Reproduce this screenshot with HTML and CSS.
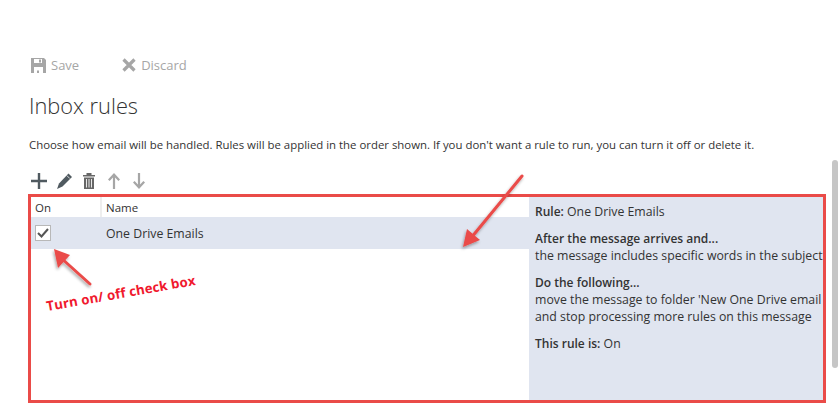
FILE: index.html
```html
<!DOCTYPE html>
<html lang="en">
<head>
<meta charset="utf-8">
<title>Inbox rules</title>
<link rel="stylesheet" href="styles.css">
</head>
<body>
<div class="page">
  <div class="actions">
    <span class="action save">
      <svg width="15" height="15" viewBox="0 0 15 15"><path fill="#a6a6a6" d="M0 0h13l2 2v13H0z"/><path fill="#fff" d="M3 1h8v4H3zM3 9h9v6H3z"/><path fill="#a6a6a6" d="M8 1.500h2v3H8zM6 12.500h2V15H6z"/></svg>
      Save
    </span>
    <span class="action discard">
      <svg width="14" height="14" viewBox="0 0 14 14"><path fill="none" stroke="#a6a6a6" stroke-width="3.200" d="M1.500 1.500l11 11M12.500 1.500l-11 11"/></svg>
      Discard
    </span>
  </div>
  <h1 class="title">Inbox rules</h1>
  <p class="intro">Choose how email will be handled. Rules will be applied in the order shown. If you don't want a rule to run, you can turn it off or delete it.</p>
  <div class="toolbar">
    <svg class="tool" width="16" height="16" viewBox="0 0 16 16"><path fill="#505a60" d="M6.800 0h2.400v6.800H16v2.400H9.200V16H6.800V9.200H0V6.800h6.800z"/></svg>
    <svg class="tool" width="15" height="16" viewBox="0 0 15 16"><path fill="#505a60" d="M11.500 0.500l3.500 3.500-9.500 9.500L0 16l2-5.500z"/><path fill="none" stroke="#fff" stroke-width=".8" d="M9.800 2.500l3 3"/></svg>
    <svg class="tool tool-trash" width="12" height="16" viewBox="0 0 12 16"><path fill="#666" d="M0 2h12v1.500H0zM3.500 0h5v2h-5zM1 4.500h10V16H1z"/><path stroke="#e8e8e8" d="M3.500 6v8.500M6 6v8.500M8.500 6v8.500"/></svg>
    <svg class="tool tool-arrow" width="12" height="16" viewBox="0 0 12 16"><path fill="#a6a6a6" d="M6 0l6 6.500-1.600 1.500-3.300-3.400V16H4.900V4.600L1.600 8 0 6.500z"/></svg>
    <svg class="tool tool-arrow" width="12" height="16" viewBox="0 0 12 16"><path fill="#a6a6a6" d="M6 16l6-6.500L10.400 8l-3.300 3.400V0H4.900v11.400L1.600 8 0 9.500z"/></svg>
  </div>
  <div class="frame">
    <div class="list">
      <div class="list-head">
        <span class="col-on">On</span>
        <span class="col-name">Name</span>
      </div>
      <div class="list-row">
        <span class="col-on"><span class="check">
          <svg width="12" height="10" viewBox="0 0 12 10"><path fill="none" stroke="#555" stroke-width="2" d="M1 5l3.500 3.500L11 1"/></svg>
        </span></span>
        <span class="col-name">One Drive Emails</span>
      </div>
    </div>
    <div class="details">
      <p class="block"><b>Rule:</b> One Drive Emails</p>
      <p class="block"><b>After the message arrives and...</b><br>the message includes specific words in the subject</p>
      <p class="block"><b>Do the following...</b><br>move the message to folder 'New One Drive email<br>and stop processing more rules on this message</p>
      <p class="block"><b>This rule is:</b> On</p>
    </div>
  </div>
</div>
<div class="scrollbar"></div>
<svg class="overlay" width="840" height="410" viewBox="0 0 840 410">
  <defs>
    <filter id="sh" x="-30%" y="-30%" width="160%" height="160%"><feDropShadow dx="-1" dy="2" stdDeviation="1.500" flood-color="#000" flood-opacity=".35"/></filter>
  </defs>
  <g filter="url(#sh)">
    <path fill="none" stroke="#ea4b48" stroke-width="3" stroke-linecap="round" d="M522 176L471 238"/>
    <path fill="#ea4b48" d="M463 247L467 229L480 240z"/>
  </g>
  <g filter="url(#sh)">
    <path fill="none" stroke="#ea4b48" stroke-width="3" stroke-linecap="round" d="M90 284L60 257"/>
    <path fill="#ea4b48" d="M54 249L70 255L58 268z"/>
  </g>
</svg>
<span class="callout">Turn on/ off check box</span>
</body>
</html>
```
FILE: styles.css
```css
html, body {
  margin: 0;
  padding: 0;
  width: 840px;
  height: 410px;
  overflow: hidden;
  background: #fff;
  font-family: "Open Sans", "Noto Sans", sans-serif;
  color: #333;
  position: relative;
}
.page {
  padding: 57px 14px 0 28px;
  box-sizing: border-box;
  width: 840px;
}
.actions {
  display: flex;
  align-items: center;
  height: 16px;
  margin-left: 3px;
  gap: 43px;
  color: #a6a6a6;
  font-size: 13px;
}
.action {
  display: inline-flex;
  align-items: center;
  gap: 5px;
}
.title {
  margin: 18px 0 0 1px;
  font-size: 21.800px;
  line-height: 30px;
  font-weight: 300;
  color: #333;
}
.intro {
  margin: 16px 0 0 1px;
  font-size: 11.400px;
  line-height: 16px;
  white-space: nowrap;
  color: #333;
}
.toolbar {
  display: flex;
  align-items: center;
  height: 16px;
  margin: 20px 0 0 3px;
}
.tool {
  margin-right: 10px;
}
.tool-trash {
  margin-left: 1px;
  margin-right: 13px;
}
.tool-arrow {
  margin-right: 13px;
}
.frame {
  display: flex;
  box-sizing: border-box;
  width: 798px;
  height: 209px;
  margin-top: 5px;
  border: 3px solid #ea4b48;
  font-size: 12.300px;
}
.list {
  width: 498px;
  flex: none;
}
.list-head, .list-row {
  display: flex;
  align-items: center;
}
.list-head {
  height: 20px;
  font-size: 11.500px;
}
.list-head .col-on {
  width: 71px;
  border-right: 2px solid #eee;
}
.list-head .col-name {
  padding-left: 4px;
}
.list-row {
  height: 32px;
  background: #e0e5f0;
}
.col-on {
  box-sizing: border-box;
  width: 70px;
  height: 100%;
  padding-left: 4px;
  display: flex;
  align-items: center;
}
.col-name {
  padding-left: 5px;
}
.check {
  box-sizing: border-box;
  width: 16px;
  height: 16px;
  border: 1px solid #b8b8b8;
  background: #fff;
  display: flex;
  align-items: center;
  justify-content: center;
}
.details {
  flex: 1;
  min-width: 0;
  overflow: hidden;
  white-space: nowrap;
  background: #e0e5f0;
  padding: 6px 0 0 6px;
  line-height: 17px;
}
.block {
  margin: 0 0 10px;
}
.block b {
  font-size: 12px;
  font-weight: 600;
}
.scrollbar {
  position: absolute;
  left: 832px;
  top: 160px;
  width: 6px;
  height: 208px;
  background: #c6c6c6;
  border-radius: 3px;
}
.overlay {
  position: absolute;
  left: 0;
  top: 0;
  pointer-events: none;
}
.callout {
  position: absolute;
  left: 48px;
  top: 297px;
  color: #f0192e;
  font-size: 13.300px;
  font-weight: 700;
  letter-spacing: .1px;
  white-space: nowrap;
  transform: rotate(-10deg);
  transform-origin: left bottom;
}
```
